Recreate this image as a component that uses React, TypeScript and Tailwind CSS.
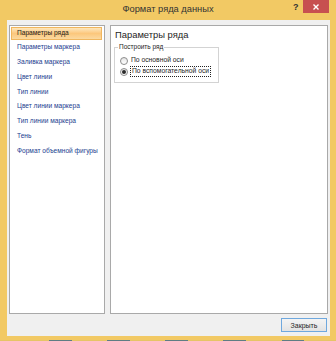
import type { ReactNode } from 'react'

const items = [
  'Параметры ряда',
  'Параметры маркера',
  'Заливка маркера',
  'Цвет линии',
  'Тип линии',
  'Цвет линии маркера',
  'Тип линии маркера',
  'Тень',
  'Формат объемной фигуры',
]

const font = { fontFamily: '"Liberation Sans", Arial, sans-serif' }

function Radio({ checked, children }: { checked?: boolean; children: ReactNode }) {
  return (
    <div className="flex h-[11px] items-center gap-[3px] whitespace-nowrap pl-[2px]">
      <span className="flex h-[8px] w-[8px] shrink-0 items-center justify-center rounded-full border border-[#8c8c8c] bg-gradient-to-b from-[#e6e6e6] to-white">
        {checked && <span className="h-[4px] w-[4px] rounded-full bg-[#2a2a2a]" />}
      </span>
      {children}
    </div>
  )
}

export default function App() {
  return (
    <div
      className="flex h-[341px] w-[336px] flex-col overflow-hidden bg-[#f2c964] text-[#1e1e1e]"
      style={font}
    >
      {/* title bar */}
      <div className="relative flex h-[20px] shrink-0 items-center justify-center">
        <span className="whitespace-nowrap text-[9.3px] leading-none text-[#333333]">Формат ряда данных</span>
        <span className="absolute left-[293px] top-[3px] text-[9px] font-bold leading-none text-[#333333]">?</span>
        <div className="absolute left-[303px] top-0 flex h-[13px] w-[26px] items-center justify-center bg-[#c75050]">
          <svg width="6" height="6" viewBox="0 0 6 6">
            <path d="M0.5 0.5 L5.5 5.5 M5.5 0.5 L0.5 5.5" stroke="white" strokeWidth="1.4" />
          </svg>
        </div>
      </div>

      {/* client area */}
      <div className="ml-[7px] mr-[6px] flex h-[316px] shrink-0 flex-col bg-[#f0f0f0] px-[2px] pt-[5px]">
        <div className="flex h-[289px] gap-[5px]">
          <div className="flex w-[96px] flex-col gap-[1.75px] border border-[#a9a9a9] bg-white pt-[0.5px]">
            {items.map((label, i) => (
              <div
                key={label}
                className={
                  i === 0
                    ? 'ml-[1px] mr-[2px] flex h-[13px] items-center whitespace-nowrap border border-[#f0b65e] bg-gradient-to-b from-[#fde7bd] via-[#fcc77c] to-[#fbd9a0] pl-[5px] text-[6.6px] leading-none text-[#1a1a1a]'
                    : 'ml-[1px] mr-[2px] flex h-[13px] items-center whitespace-nowrap pl-[6px] text-[6.6px] leading-none text-[#21408f]'
                }
              >
                {label}
              </div>
            ))}
          </div>

          <div className="flex flex-1 flex-col border border-[#a9a9a9] bg-white pl-[3px] pt-[3px]">
            <div className="whitespace-nowrap pl-[1px] text-[9.4px] leading-[12px] text-[#1e1e1e]">Параметры ряда</div>
            <fieldset className="mt-[1px] w-[105px] border border-[#d3d3d3] px-[3px] pb-[5px] pt-[3px]">
              <legend className="whitespace-nowrap px-[1px] text-[6.5px] leading-[10px] text-[#1e1e1e]">Построить ряд</legend>
              <Radio>
                <span className="text-[6.75px] leading-none">По основной оси</span>
              </Radio>
              <Radio checked>
                <span className="px-[1px] py-[1px] text-[6.75px] leading-none outline outline-1 outline-dotted outline-[#222222]">
                  По вспомогательной оси
                </span>
              </Radio>
            </fieldset>
          </div>
        </div>

        <div className="flex justify-end pr-[1px] pt-[4px]">
          <button
            type="button"
            className="flex h-[14px] w-[46px] items-center justify-center whitespace-nowrap border border-[#6fa8de] bg-gradient-to-b from-[#f4f4f4] to-[#e3e3e3] text-[7px] leading-none text-[#1e1e1e]"
          >
            Закрыть
          </button>
        </div>
      </div>

      {/* bottom frame and strip behind */}
      <div className="h-[4px] shrink-0" />
      <div className="flex h-[1px] shrink-0 bg-[#e6c466]">
        <div className="w-[49px]" />
        <div className="w-[23px] bg-[#5f7d84]" />
        <div className="w-[35px]" />
        <div className="w-[23px] bg-[#5f7d84]" />
        <div className="w-[35px]" />
        <div className="w-[23px] bg-[#5f7d84]" />
        <div className="w-[35px]" />
        <div className="w-[23px] bg-[#5f7d84]" />
        <div className="w-[36px]" />
        <div className="w-[22px] bg-[#5f7d84]" />
      </div>
    </div>
  )
}
